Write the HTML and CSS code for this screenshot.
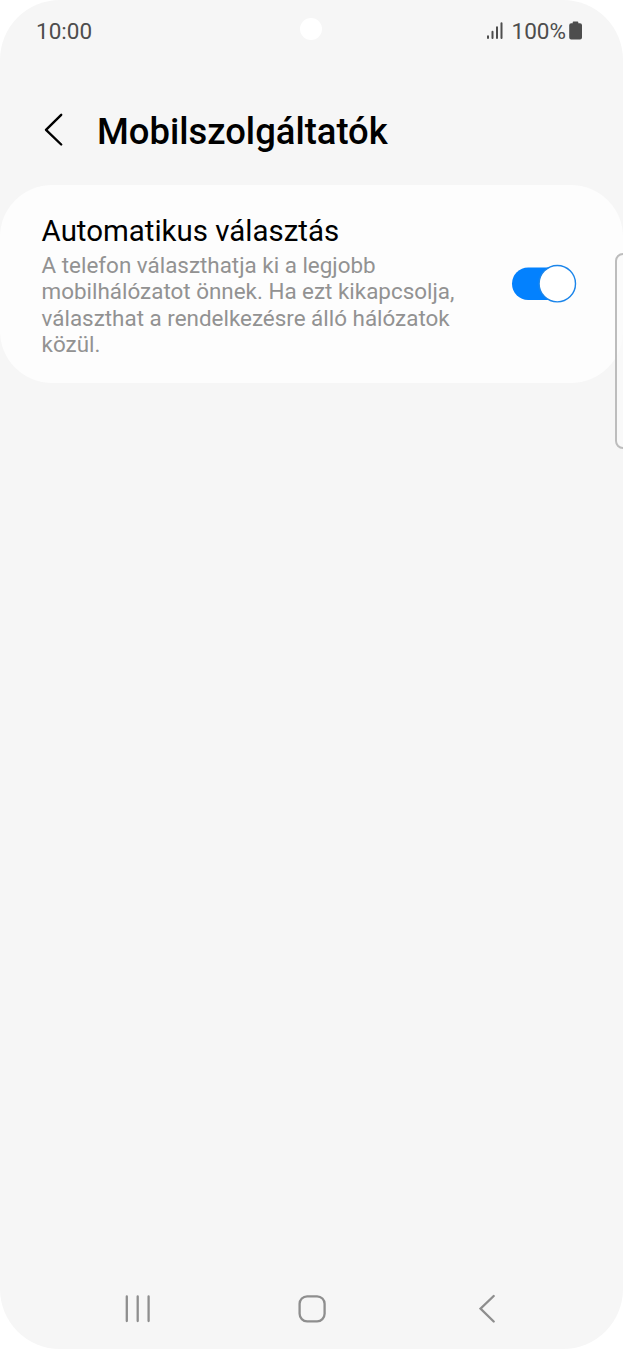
FILE: index.html
```html
<!DOCTYPE html>
<html lang="hu">

<head>
    <meta charset="UTF-8">
    <meta name="viewport" content="width=device-width, initial-scale=1.0">
    <title>Mobilszolgáltatók</title>
    <link rel="stylesheet" href="styles.css">
</head>

<body>

    <div class="phone">
        <div class="status-bar">
            <span class="time">10:00</span>
            <div class="status-icons">
                <svg class="signal" width="18" height="18" viewBox="0 0 18 18">
                    <path d="M2 14.2V16M6.5 9.7V16M11 5.2V16M15.5 1.2V16" />
                </svg>
                <span class="percent">100%</span>
                <svg class="battery" width="14" height="19" viewBox="0 0 14 19">
                    <path d="M4.5 .5h4q.8 0 .8 .8v.9h1.7q2 0 2 2V16.5q0 2-2 2H2.2q-2 0-2-2V4.2q0-2 2-2h1.5v-.9q0-.8 .8-.8z" />
                </svg>
            </div>
            <div class="camera"></div>
        </div>

        <header class="header">
            <svg class="back" width="22" height="36" viewBox="0 0 22 36">
                <path d="M19.2 2.8L4 17.8L19.2 32.5" />
            </svg>
            <h1>Mobilszolgáltatók</h1>
        </header>

        <main class="card">
            <div class="setting">
                <h2>Automatikus választás</h2>
                <p>A telefon választhatja ki a legjobb<br>mobilhálózatot önnek. Ha ezt kikapcsolja,<br>választhat a rendelkezésre álló hálózatok<br>közül.</p>
            </div>
            <!-- toggle, on -->
            <svg class="switch" width="66" height="40" viewBox="0 0 66 40">
                <rect class="track" x="1" y="3.5" width="60" height="32.5" rx="16.2" />
                <circle class="knob" cx="46.3" cy="19.7" r="18.2" />
            </svg>
        </main>

        <!-- edge panel handle -->
        <div class="edge-handle"></div>

        <nav class="nav-bar">
            <svg width="28" height="30" viewBox="0 0 28 30">
                <path d="M2.8 2.5V27M13.7 2.5V27M24.6 2.5V27" />
            </svg>
            <svg width="30" height="30" viewBox="0 0 30 30">
                <rect x="2.6" y="2.3" width="25" height="25" rx="7.5" />
            </svg>
            <svg width="20" height="30" viewBox="0 0 20 30">
                <path d="M14.7 2L1.5 14.7L14.7 27.5" />
            </svg>
        </nav>
    </div>

</body>

</html>
```

FILE: styles.css
```css
body {
    margin: 0;
    background-color: #fff;
    font-family: Roboto, "Liberation Sans", sans-serif;
}

.phone {
    position: relative;
    display: flex;
    flex-direction: column;
    height: 1349px;
    border-radius: 60px;
    background-color: #f6f6f6;
    overflow: hidden;
}

.status-bar {
    position: relative;
    display: flex;
    justify-content: space-between;
    align-items: center;
    height: 61px;
    padding: 0 40px 0 36px;
    color: #4d4d4d;
    font-size: 22.5px;
}

.status-icons {
    display: flex;
    align-items: center;
}

.signal {
    margin-right: 8px;
    fill: none;
    stroke: #4d4d4d;
    stroke-width: 2;
    stroke-linecap: round;
}

.battery {
    margin-left: 3px;
    fill: #4d4d4d;
}

.camera {
    position: absolute;
    left: 300px;
    top: 18px;
    width: 22px;
    height: 22px;
    border-radius: 50%;
    background-color: #fff;
}

.header {
    display: flex;
    align-items: center;
    height: 124px;
    padding: 28px 42px 14px;
    box-sizing: border-box;
}

.header h1 {
    margin: 4px 0 0 33px;
    font-size: 36.4px;
    font-weight: 500;
    line-height: 42px;
    color: #000;
}

.back {
    fill: none;
    stroke: #000;
    stroke-width: 2.4;
    stroke-linecap: round;
    stroke-linejoin: round;
}

.card {
    display: flex;
    justify-content: space-between;
    align-items: center;
    height: 197.5px;
    padding: 0 46px 0 41.6px;
    border-radius: 52px;
    background-color: #fdfdfd;
}

.setting h2 {
    margin: 2px 0 0;
    font-size: 29.45px;
    font-weight: 400;
    line-height: 38px;
    color: #000;
}

.setting p {
    margin: 2px 0 0;
    font-size: 22.42px;
    line-height: 26.4px;
    color: #929292;
    white-space: nowrap;
}

.track {
    fill: #0381fe;
}

.knob {
    fill: #fff;
    stroke: #1b85ea;
    stroke-width: 1.4;
}

.edge-handle {
    position: absolute;
    top: 253px;
    right: -8px;
    width: 12px;
    height: 192px;
    border: 2px solid #bdbdbd;
    border-radius: 8px;
    background-color: rgba(250, 250, 250, 0.8);
}

.nav-bar {
    display: grid;
    grid-template-columns: 173px 182px auto;
    align-items: center;
    height: 81px;
    margin-top: auto;
    padding-left: 124px;
}

.nav-bar svg {
    fill: none;
    stroke: #8e8e8e;
    stroke-width: 2.3;
    stroke-linecap: round;
}
```
